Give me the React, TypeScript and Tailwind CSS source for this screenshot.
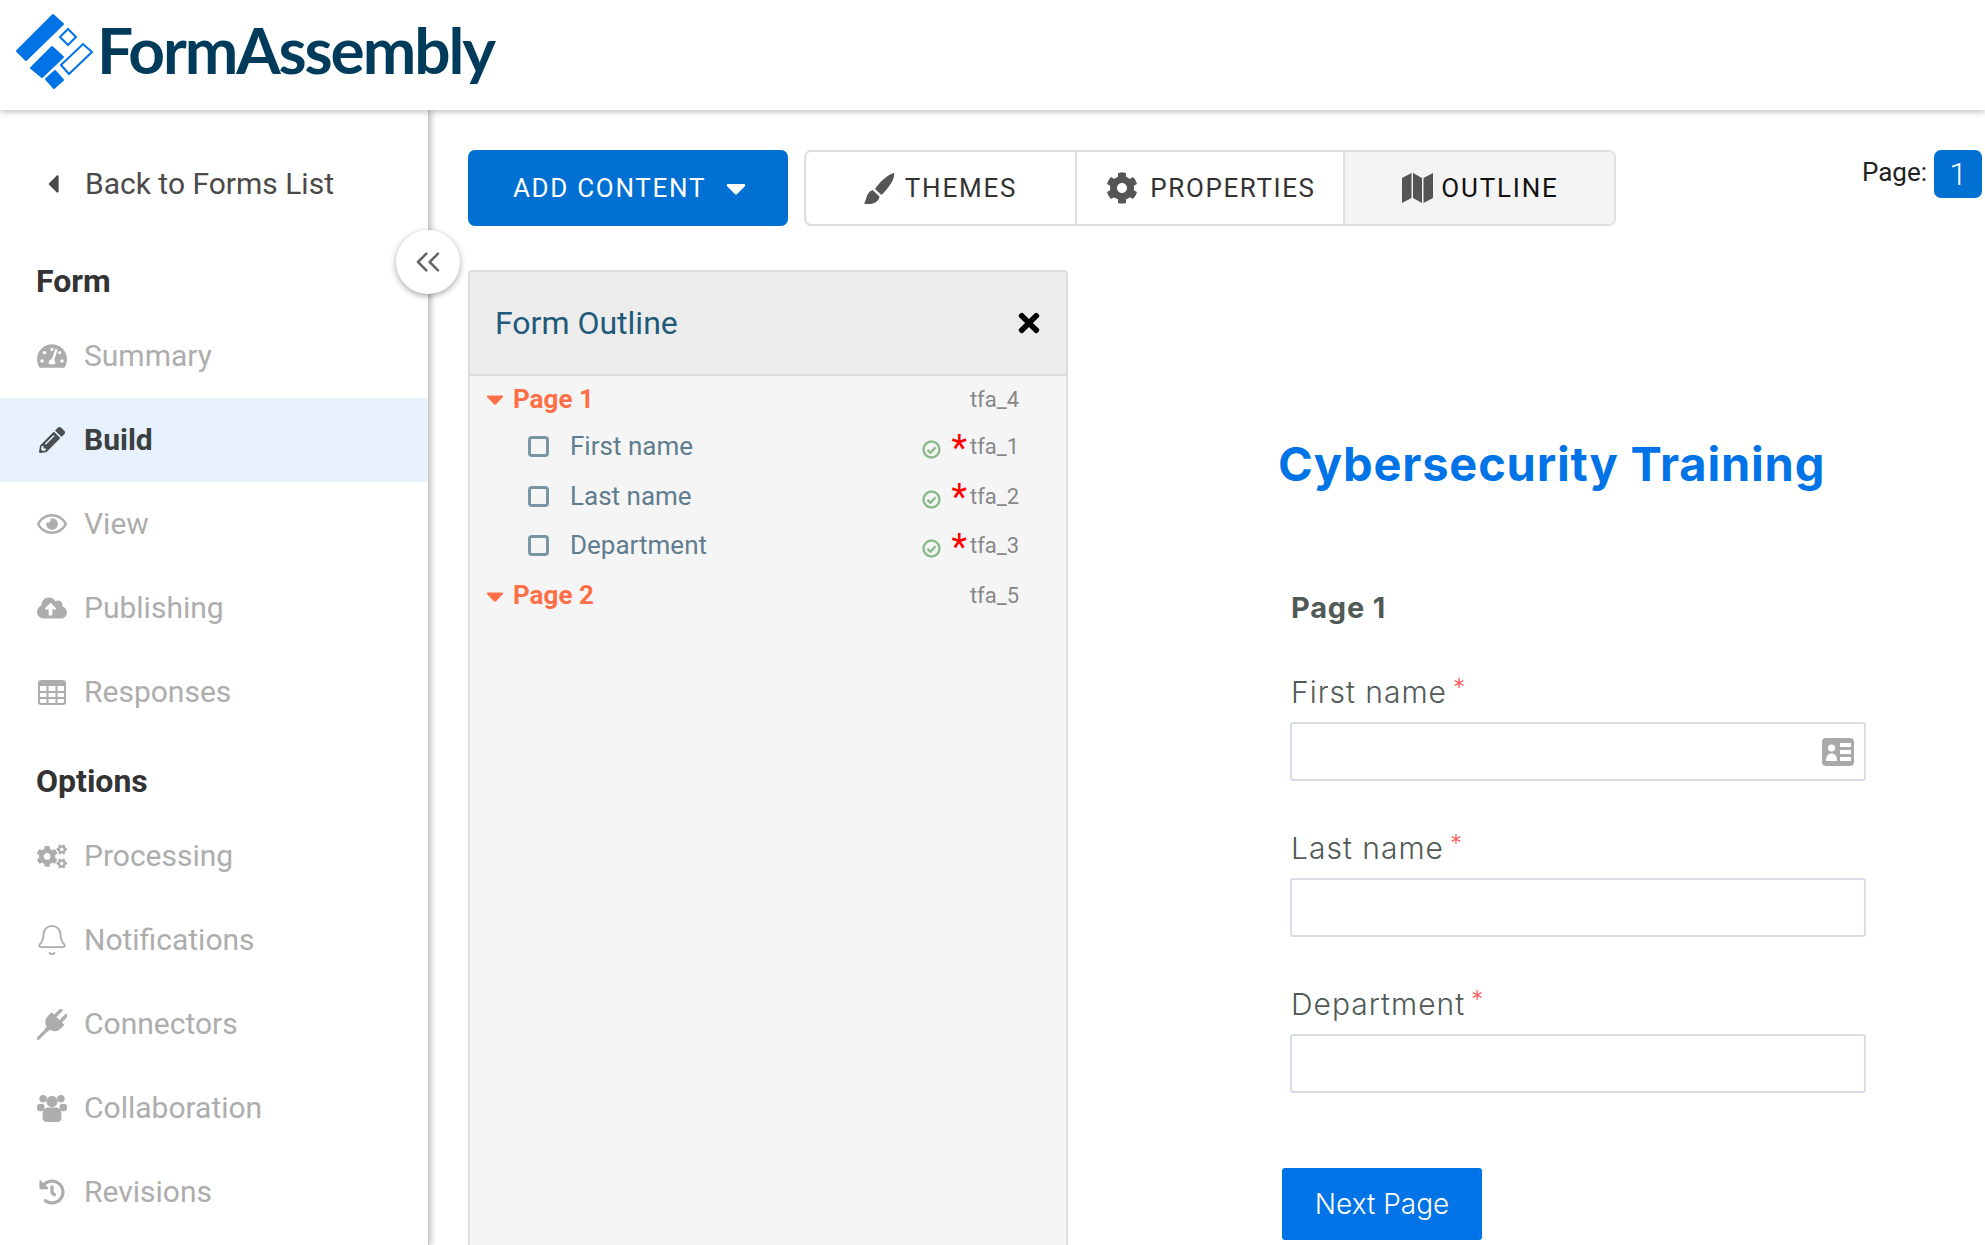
import { Bell, ChevronsLeft } from 'lucide-react';
import {
  FaCaretDown,
  FaCaretLeft,
  FaCog,
  FaCogs,
  FaCloudUploadAlt,
  FaHistory,
  FaPencilAlt,
  FaRegEye,
  FaTachometerAlt,
  FaTimes,
} from 'react-icons/fa';
import type { ReactNode } from 'react';

type NavItem = { label: string; icon: ReactNode; active?: boolean };

function TableIcon() {
  return (
    <svg width="28" height="25" viewBox="0 0 28 25" className="text-[#adadad]">
      <rect x="1" y="1" width="26" height="23" rx="2" fill="none" stroke="currentColor" strokeWidth="2" />
      <rect x="1" y="1" width="26" height="5" fill="currentColor" />
      <path d="M1 12h26M1 18h26M9.5 6v18M18.5 6v18" stroke="currentColor" strokeWidth="2" fill="none" />
    </svg>
  );
}

function PlugIcon() {
  return (
    <svg width="31" height="31" viewBox="0 0 30 30" className="text-[#adadad]" fill="currentColor">
      <g transform="rotate(45 15 15)">
        <rect x="9.5" y="-3" width="3.4" height="10" rx="1.5" />
        <rect x="17.1" y="-3" width="3.4" height="10" rx="1.5" />
        <path d="M6 6.5h18v5c0 5-3 8-7 9v3h-4v-3c-4-1-7-4-7-9z" />
        <rect x="13.4" y="22" width="3.2" height="14" rx="1.5" />
      </g>
    </svg>
  );
}

function UsersIcon() {
  return (
    <svg width="32" height="30" viewBox="0 0 32 30" className="text-[#adadad]" fill="currentColor">
      <circle cx="6.5" cy="5" r="4" />
      <circle cx="25.5" cy="5" r="4" />
      <rect x="0" y="10.5" width="8" height="8" rx="3.5" />
      <rect x="24" y="10.5" width="8" height="8" rx="3.5" />
      <circle cx="16" cy="8" r="6" />
      <path d="M6 26v-5c0-4 3-6.500 6-6.500h8c3 0 6 2.500 6 6.500v5c0 2.500-2 4-4 4H10c-2 0-4-1.500-4-4z" />
    </svg>
  );
}

function BrushIcon() {
  return (
    <svg width="31" height="31" viewBox="0 0 31 31" className="mr-[10px] text-[#555555]" fill="currentColor">
      <path d="M30 0C31.500 5 25 15 17.500 22L11 16C15 9.500 24.500 1 30 0z" />
      <path d="M8.500 17L15.500 23.500C15 28.500 8 33 0 30.500C2.500 28 1.500 20 8.500 17z" />
    </svg>
  );
}

function MapIcon() {
  return (
    <svg width="31" height="30" viewBox="0 0 31 30" className="mr-[8px] text-[#555555]" fill="currentColor">
      <polygon points="0,5 9.500,0 9.500,25 0,30" />
      <polygon points="11,0 20,5 20,30 11,25" />
      <polygon points="21.500,5 31,0 31,25 21.500,30" />
    </svg>
  );
}

function CardIcon() {
  return (
    <svg width="32" height="28" viewBox="0 0 32 28">
      <rect width="32" height="28" rx="4" fill="#a9a9a9" />
      <circle cx="9.500" cy="10" r="3.600" fill="#fff" />
      <path d="M4 23c0-5 2-7.500 5.500-7.500S15 18 15 23z" fill="#fff" />
      <path d="M18 5h11v4H18zM18 12h11v4H18zM18 19h11v4H18z" fill="#fff" />
    </svg>
  );
}

function CheckIcon() {
  return (
    <svg width="19" height="19" viewBox="0 0 19 19" className="ml-auto mt-[6px]" fill="none" stroke="#8abb8a">
      <circle cx="9.500" cy="9.500" r="8" strokeWidth="2.400" />
      <path d="M5.500 9.800l3 3 5-5.600" strokeWidth="2.400" />
    </svg>
  );
}

const gray = 'text-[#adadad]';

const formItems: NavItem[] = [
  { label: 'Summary', icon: <FaTachometerAlt className={`text-[30px] ${gray}`} /> },
  { label: 'Build', icon: <FaPencilAlt className="text-[26px] text-[#4a4f52]" />, active: true },
  { label: 'View', icon: <FaRegEye className={`text-[30px] ${gray}`} /> },
  { label: 'Publishing', icon: <FaCloudUploadAlt className={`text-[32px] ${gray}`} /> },
  { label: 'Responses', icon: <TableIcon /> },
];

const optionItems: NavItem[] = [
  { label: 'Processing', icon: <FaCogs className={`text-[33px] ${gray}`} /> },
  { label: 'Notifications', icon: <Bell className={`h-[34px] w-[34px] shrink-0 ${gray}`} strokeWidth={1.3} /> },
  { label: 'Connectors', icon: <PlugIcon /> },
  { label: 'Collaboration', icon: <UsersIcon /> },
  { label: 'Revisions', icon: <FaHistory className={`text-[26px] ${gray}`} /> },
];

const outlineFields = [
  { label: 'First name', id: 'tfa_1' },
  { label: 'Last name', id: 'tfa_2' },
  { label: 'Department', id: 'tfa_3' },
];

function Logo() {
  return (
    <div className="flex items-center pl-4">
      <svg width="78" height="78" viewBox="16 13 78 78" className="mb-[6px] shrink-0">
        <g fill="#0073e6" stroke="#0073e6" strokeWidth="2" strokeLinejoin="round">
          <polygon points="17,51 53,15 63,24 26,60" />
          <polygon points="31,68 52,47 63,57 42,77" />
          <polygon points="46,79 55,71 63,80 54,88" />
        </g>
        <g fill="#ffffff" stroke="#0073e6" strokeWidth="2">
          <polygon points="60,37 68,29 76,37 68,45" />
          <polygon points="61,65 83,44 92,52 69,74" />
        </g>
      </svg>
      <span className="mb-[10px] ml-[3px] font-['Lato'] text-[64px] font-bold leading-none tracking-[-2.1px] text-[#003b5c]">
        FormAssembly
      </span>
    </div>
  );
}

function SideRow({ item }: { item: NavItem }) {
  return (
    <div className={`flex h-[84px] items-center pl-[37px] ${item.active ? 'bg-[#e6f1fb]' : ''}`}>
      <span className="flex w-[30px] justify-center">{item.icon}</span>
      <span
        className={`ml-[17px] text-[30px] leading-none ${
          item.active ? 'font-bold text-[#3a3f42]' : 'text-[#adadad]'
        }`}
      >
        {item.label}
      </span>
    </div>
  );
}

function Sidebar() {
  return (
    <aside className="relative z-[5] w-[429px] shrink-0 border-r border-[#c8c8c8] bg-white pt-[31px] shadow-[3px_0_5px_rgba(0,0,0,0.2)]">
      <div className="flex h-[84px] items-center pl-[38px] pt-[2px]">
        <FaCaretLeft className="text-[30px] text-[#4a4a4a]" />
        <span className="ml-[17px] text-[30px] leading-none text-[#4a4a4a]">Back to Forms List</span>
      </div>
      <div className="flex h-[89px] items-center pl-[36px] pt-[23px] text-[32px] font-bold text-[#333333]">Form</div>
      {formItems.map((item) => (
        <SideRow key={item.label} item={item} />
      ))}
      <div className="flex h-[80px] items-center pl-[36px] pt-[14px] text-[32px] font-bold text-[#333333]">Options</div>
      {optionItems.map((item) => (
        <SideRow key={item.label} item={item} />
      ))}
      <button className="absolute left-[396px] top-[120px] flex h-[64px] w-[64px] items-center justify-center rounded-full bg-white shadow-[0_2px_6px_rgba(0,0,0,0.35)]">
        <ChevronsLeft className="h-[40px] w-[40px] text-[#666666]" strokeWidth={1.5} />
      </button>
    </aside>
  );
}

function Toolbar() {
  return (
    <div className="flex items-start">
      <button className="flex h-[76px] w-[320px] items-center justify-center rounded-[7px] bg-[#0070d2] pl-[9px] text-[26px] tracking-[1.7px] text-white">
        ADD CONTENT
        <FaCaretDown className="ml-[14px] text-[32px]" />
      </button>
      <div className="ml-[16px] flex h-[76px] w-[812px] overflow-hidden rounded-[7px] border-2 border-[#dfdddd] text-[26px] tracking-[1.8px]">
        <div className="flex w-[269px] items-center justify-center text-[#333333]">
          <BrushIcon />
          THEMES
        </div>
        <div className="flex w-[270px] items-center justify-center border-x-2 border-[#dfdddd] pl-[2px] tracking-[1.6px] text-[#333333]">
          <FaCog className="mr-[12px] text-[32px] text-[#555555]" />
          PROPERTIES
        </div>
        <div className="flex flex-1 items-center justify-center bg-[#f4f4f4] pl-[2px] text-[#111111]">
          <MapIcon />
          OUTLINE
        </div>
      </div>
      <div className="ml-auto mr-[3px] flex items-start">
        <span className="mt-[7px] text-[26px] leading-[30px] text-[#222222]">Page:</span>
        <span className="ml-[7px] flex h-[48px] w-[48px] items-center justify-center rounded-[7px] bg-[#0070d2] text-[32px] font-light text-white">
          1
        </span>
      </div>
    </div>
  );
}

function OutlinePageRow({ label, id, className }: { label: string; id: string; className: string }) {
  return (
    <div className={`flex items-center pl-[11px] pr-[47px] ${className}`}>
      <FaCaretDown className="text-[28px] text-[#ff6f47]" />
      <span className="ml-[4px] text-[26px] font-bold text-[#ff6f47]">{label}</span>
      <span className="ml-auto text-[22px] text-[#888888]">{id}</span>
    </div>
  );
}

function OutlineFieldRow({ label, id }: { label: string; id: string }) {
  return (
    <div className="flex h-[49.5px] items-center pl-[58px] pr-[46px]">
      <span className="h-[21px] w-[21px] rounded-[4px] border-[3px] border-[#7a95a4]" />
      <span className="ml-[21px] text-[26px] text-[#5f7d8e]">{label}</span>
      <CheckIcon />
      <span className="ml-[10px] -mt-[4px] h-[30px] text-[36px] leading-[36px] text-[#ff0000]">*</span>
      <span className="ml-[3px] w-[50px] text-[22px] text-[#888888]">{id}</span>
    </div>
  );
}

function OutlinePanel() {
  return (
    <section className="h-[980px] w-[600px] shrink-0 rounded-t-[4px] border-2 border-[#dddddd] bg-[#f5f5f5]">
      <div className="flex h-[104px] items-center justify-between border-b-2 border-[#dddddd] bg-[#ececec] pl-[25px] pr-[22px]">
        <h2 className="text-[32px] text-[#1f5a7a]">Form Outline</h2>
        <FaTimes className="text-[30px] text-black" />
      </div>
      <OutlinePageRow label="Page 1" id="tfa_4" className="h-[46px]" />
      {outlineFields.map((field) => (
        <OutlineFieldRow key={field.id} label={field.label} id={field.id} />
      ))}
      <OutlinePageRow label="Page 2" id="tfa_5" className="h-[50px]" />
    </section>
  );
}

function Field({ label, mt, icon }: { label: string; mt: string; icon?: boolean }) {
  return (
    <div className={`ml-[222px] ${mt}`}>
      <div className="flex h-[36px] items-center pl-px text-[30px] font-light tracking-[1px] text-[#505a57]">
        {label}
        <span className="mb-[8px] ml-[6px] text-[24px] text-[#ff5a5a]">*</span>
      </div>
      <div className="mt-[12px] flex h-[59px] w-[576px] items-center justify-end rounded-[3px] border-2 border-[#d8dce8] bg-white pr-[10px]">
        {icon && <CardIcon />}
      </div>
    </div>
  );
}

function FormPreview() {
  return (
    <section className="flex-1 font-['Inter']">
      <h1 className="ml-[210px] mt-[164px] h-[60px] text-[47px] font-bold leading-[60px] tracking-[0.8px] text-[#0073e6]">
        Cybersecurity Training
      </h1>
      <h3 className="ml-[223px] mt-[94px] h-[40px] text-[29px] font-bold leading-[40px] tracking-[0.8px] text-[#505a57]">
        Page 1
      </h3>
      <Field label="First name" mt="mt-[46px]" icon />
      <Field label="Last name" mt="mt-[49px]" />
      <Field label="Department" mt="mt-[49px]" />
      <button className="ml-[214px] mt-[75px] h-[72px] w-[200px] rounded-[3px] bg-[#0073e6] text-[28px] font-light text-white">
        Next Page
      </button>
    </section>
  );
}

export default function App() {
  return (
    <div className="flex h-[1245px] w-[1985px] flex-col overflow-hidden bg-white font-['Roboto',sans-serif]">
      <header className="relative z-10 flex h-[110px] shrink-0 items-center bg-white shadow-[0_2px_6px_rgba(0,0,0,0.25)]">
        <Logo />
      </header>
      <div className="flex min-h-0 flex-1">
        <Sidebar />
        <main className="min-w-0 flex-1 pl-[39px] pt-[40px]">
          <Toolbar />
          <div className="mt-[44px] flex">
            <OutlinePanel />
            <FormPreview />
          </div>
        </main>
      </div>
    </div>
  );
}
